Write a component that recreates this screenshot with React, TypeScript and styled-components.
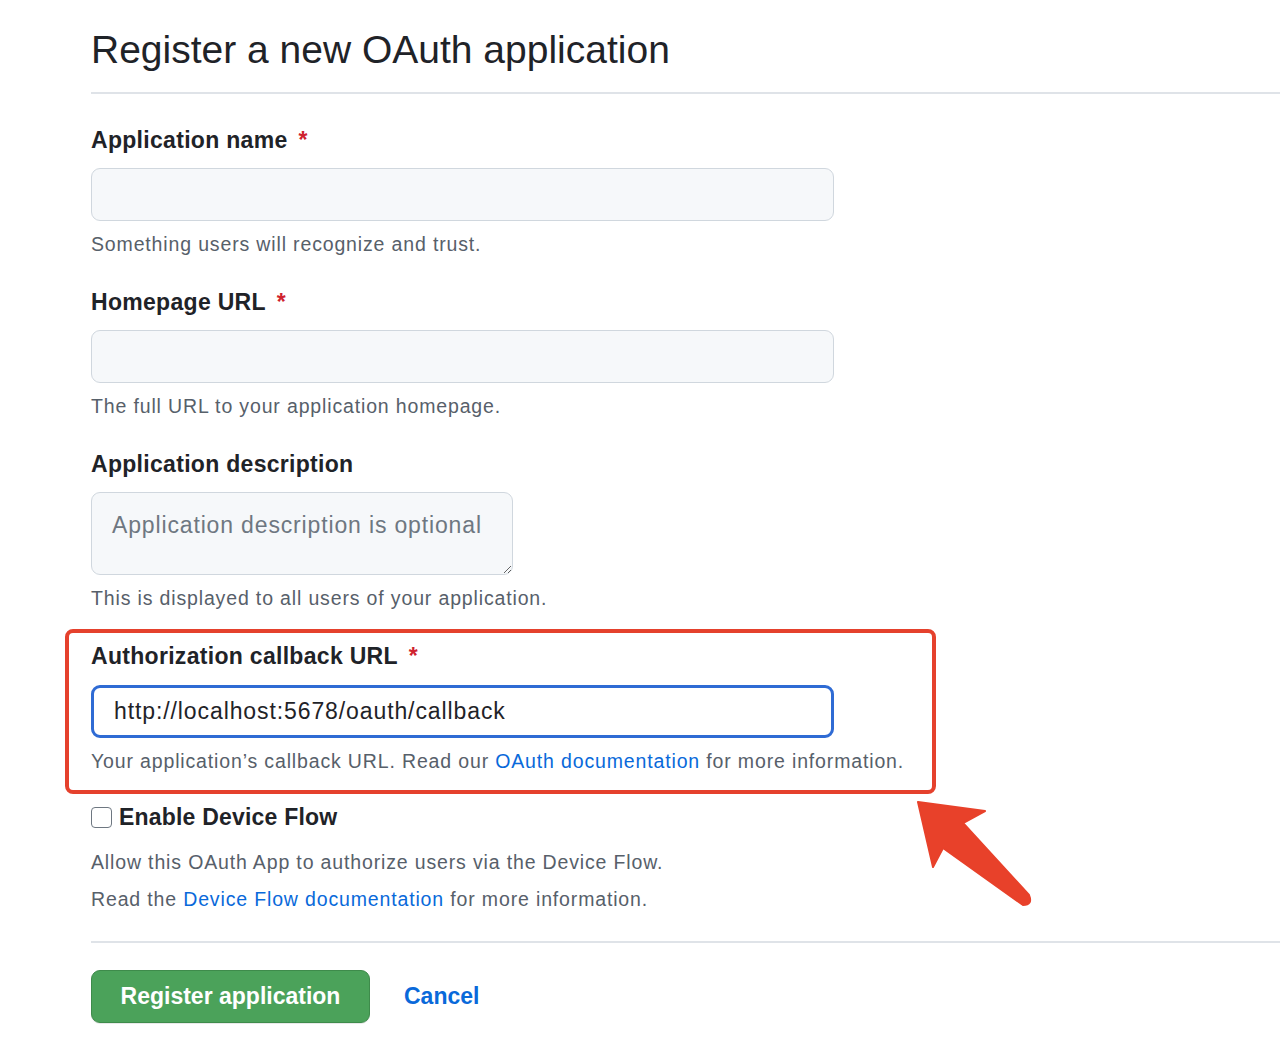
import styled, { createGlobalStyle } from 'styled-components'

const GlobalStyle = createGlobalStyle`
   html, body {
      margin: 0;
      padding: 0;
      background: #ffffff;
   }
   body {
      font-family: 'Liberation Sans', Arial, sans-serif;
      color: #1f2328;
      overflow: hidden;
   }
`

const Page = styled.div`
   position: relative;
   width: 1280px;
   height: 1061px;
   overflow: hidden;
`

const Content = styled.main`
   margin-left: 91px;
   padding-top: 26px;
`

const Header = styled.header`
   border-bottom: 2px solid #dfe3e8;
   padding-bottom: 18px;
   margin-bottom: 30px;
`

const Title = styled.h1`
   margin: 0;
   font-size: 39px;
   line-height: 48px;
   font-weight: 400;
   color: #1f2328;
`

const Group = styled.div<{ $gap?: number }>`
   width: 743px;
   margin-bottom: ${p => p.$gap ?? 28}px;
`

const Highlight = styled.div`
   box-sizing: border-box;
   width: 871px;
   margin-left: -26px;
   padding: 7px 22px 15px;
   border: 4px solid #e5412d;
   border-radius: 8px;
`

const Label = styled.label`
   display: block;
   font-size: 23px;
   line-height: 32px;
   font-weight: 700;
   letter-spacing: 0.3px;
   color: #1f2328;
`

const Required = styled.span`
   color: #cf222e;
   margin-left: 11px;
`

const Input = styled.input<{ $focused?: boolean }>`
   box-sizing: border-box;
   display: block;
   width: 743px;
   height: 53px;
   margin-top: ${p => (p.$focused ? 13 : 12)}px;
   padding: 0 20px;
   font-family: inherit;
   font-size: 23px;
   letter-spacing: 0.9px;
   color: #1f2328;
   border-radius: 9px;
   outline: none;
   background: ${p => (p.$focused ? '#ffffff' : '#f6f8fa')};
   border: ${p => (p.$focused ? '3px solid #2f6bd4' : '1.5px solid #d0d7de')};
`

const TextArea = styled.textarea`
   box-sizing: border-box;
   display: block;
   width: 422px;
   height: 83px;
   margin-top: 12px;
   padding: 16px 20px;
   font-family: inherit;
   font-size: 23px;
   line-height: 32px;
   letter-spacing: 0.85px;
   color: #1f2328;
   background: #f6f8fa;
   border: 1.5px solid #d0d7de;
   border-radius: 9px;
   outline: none;
   resize: vertical;

   &::placeholder {
      color: #6e7781;
   }
`

const Note = styled.p<{ $gap?: number }>`
   margin: ${p => p.$gap ?? 9}px 0 0;
   font-size: 19.5px;
   line-height: 28px;
   letter-spacing: 0.85px;
   color: #57606a;
   white-space: nowrap;
`

const Link = styled.a`
   color: #0969da;
   text-decoration: none;
`

const CheckRow = styled.label`
   display: flex;
   align-items: center;
   gap: 7px;
   margin-top: 7px;
   font-size: 23px;
   line-height: 32px;
   font-weight: 700;
   letter-spacing: 0.2px;
   color: #1f2328;
`

const Checkbox = styled.input`
   appearance: none;
   box-sizing: border-box;
   width: 21px;
   height: 21px;
   margin: 0;
   border: 1.5px solid #6e7781;
   border-radius: 4px;
   background: #ffffff;
`

const Footer = styled.div`
   display: flex;
   align-items: center;
   gap: 34px;
   margin-top: 28px;
   padding-top: 27px;
   border-top: 2px solid #dfe3e8;
`

const PrimaryButton = styled.button`
   box-sizing: border-box;
   width: 279px;
   height: 53px;
   font-family: inherit;
   font-size: 23px;
   font-weight: 700;
   color: #ffffff;
   background: #4ba25a;
   border: 1.5px solid #3e8b4b;
   border-radius: 9px;
   box-shadow: 0 1px 0 rgba(31, 35, 40, 0.1);
`

const CancelLink = styled(Link)`
   font-size: 23px;
   font-weight: 700;
`

const Arrow = styled.svg`
   position: absolute;
   left: 0;
   top: 0;
   pointer-events: none;
`

export default function App() {
   return (
      <Page>
         <GlobalStyle />
         <Content>
            <Header>
               <Title>Register a new OAuth application</Title>
            </Header>

            <Group>
               <Label>
                  Application name<Required>*</Required>
               </Label>
               <Input type="text" />
               <Note>Something users will recognize and trust.</Note>
            </Group>

            <Group>
               <Label>
                  Homepage URL<Required>*</Required>
               </Label>
               <Input type="text" />
               <Note>The full URL to your application homepage.</Note>
            </Group>

            <Group $gap={17}>
               <Label>Application description</Label>
               <TextArea placeholder="Application description is optional" />
               <Note>This is displayed to all users of your application.</Note>
            </Group>

            <Highlight>
               <Label>
                  Authorization callback URL<Required>*</Required>
               </Label>
               <Input $focused type="text" defaultValue="http://localhost:5678/oauth/callback" />
               <Note>
                  Your application’s callback URL. Read our <Link href="#">OAuth documentation</Link> for more
                  information.
               </Note>
            </Highlight>

            <CheckRow>
               <Checkbox type="checkbox" />
               Enable Device Flow
            </CheckRow>
            <Note $gap={15}>Allow this OAuth App to authorize users via the Device Flow.</Note>
            <Note>
               Read the <Link href="#">Device Flow documentation</Link> for more information.
            </Note>

            <Footer>
               <PrimaryButton>Register application</PrimaryButton>
               <CancelLink href="#">Cancel</CancelLink>
            </Footer>
         </Content>

         <Arrow width="1280" height="1061" viewBox="0 0 1280 1061">
            <path
               d="M918 802 L985 811 L963 823 L1029 895 Q1033 905 1023 905 L943 848 L933 867 Z"
               fill="#e8412a"
               stroke="#e8412a"
               strokeWidth="2"
               strokeLinejoin="round"
            />
         </Arrow>
      </Page>
   )
}
